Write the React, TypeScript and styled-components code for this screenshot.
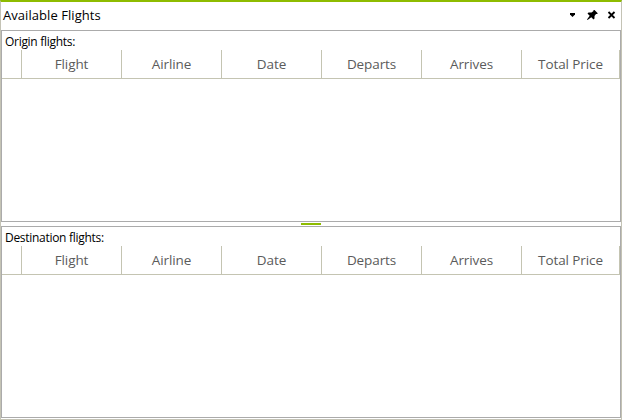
import React from "react";
import styled, { createGlobalStyle } from "styled-components";

const GlobalStyle = createGlobalStyle`
  * { box-sizing: border-box; }
  body { margin: 0; background: #fff; font-family: "Open Sans", "Noto Sans", sans-serif; }
`;
const Window = styled.main`
  width: 622px; height: 420px; display: flex; flex-direction: column;
  border: 1px solid #c4c3b5; border-top: 2px solid #8ebc00; background: #fff; overflow: hidden;
`;
const TitleBar = styled.header`
  height: 28px; flex: none; display: flex; align-items: flex-start; justify-content: space-between;
  padding: 0 1px 0 2px;
`;
const Title = styled.h1`
  margin: 0; font-size: 13px; font-weight: 400; line-height: 26px; letter-spacing: 0.06px;
  color: #000; white-space: nowrap;
`;
const Actions = styled.div`
  display: flex; gap: 4px; align-items: center; height: 26px;
`;
const ActionButton = styled.button`
  width: 16px; height: 16px; padding: 0; border: 0; background: none; display: block;
  svg { display: block; }
`;
const Pane = styled.section`
  flex: none; height: 192px; border: 1px solid #ababab; background: #fff;
`;
const Caption = styled.div`
  height: 19px; padding-left: 3px; font-size: 12px; line-height: 21px; letter-spacing: -0.29px;
  white-space: nowrap; color: #000;
`;
const HeaderRow = styled.div`
  height: 29px; display: grid; grid-template-columns: 20px repeat(5, 100px) 98px;
  border-bottom: 1px solid #c4c4b2;
`;
const HeaderCell = styled.div`
  border-right: 1px solid #c4c4b2; text-align: center; font-size: 13.5px; line-height: 28px;
  letter-spacing: -0.1px; color: #5b5b5b; white-space: nowrap;
`;
const Splitter = styled.div`
  height: 4px; flex: none; display: flex; justify-content: center; align-items: center;
`;
const Grip = styled.div` width: 20px; height: 2px; background: #8ebc00; `;

const columns = ["", "Flight", "Airline", "Date", "Departs", "Arrives", "Total Price"];

const FlightsPane = ({ caption }: { caption: string }) => (
  <Pane>
    <Caption>{caption}</Caption>
    <HeaderRow>{columns.map((c) => <HeaderCell key={c}>{c}</HeaderCell>)}</HeaderRow>
  </Pane>
);

export default function App() {
  return (
    <>
      <GlobalStyle />
      <Window>
        <TitleBar>
          <Title>Available Flights</Title>
          <Actions>
            <ActionButton aria-label="Window menu">
              <svg width="16" height="16"><path d="M6 6h5v1.500L8.500 10 6 7.500z" fill="#000" /></svg>
            </ActionButton>
            <ActionButton aria-label="Auto hide">
              <svg width="16" height="16"><path d="M9.500 3h1L13.500 6v1h-1.500L10.500 9v2.500l-1 1L7.300 10.300 3.500 13 3 12.500l2.700-3.800L3.500 6.500l1-1H7.500L9.500 4z" fill="#000" /></svg>
            </ActionButton>
            <ActionButton aria-label="Close">
              <svg width="16" height="16"><path d="M4.500 5l6 6M10.500 5l-6 6" stroke="#000" strokeWidth="1.8" fill="none" /></svg>
            </ActionButton>
          </Actions>
        </TitleBar>
        <FlightsPane caption="Origin flights:" />
        <Splitter><Grip /></Splitter>
        <FlightsPane caption="Destination flights:" />
      </Window>
    </>
  );
}
